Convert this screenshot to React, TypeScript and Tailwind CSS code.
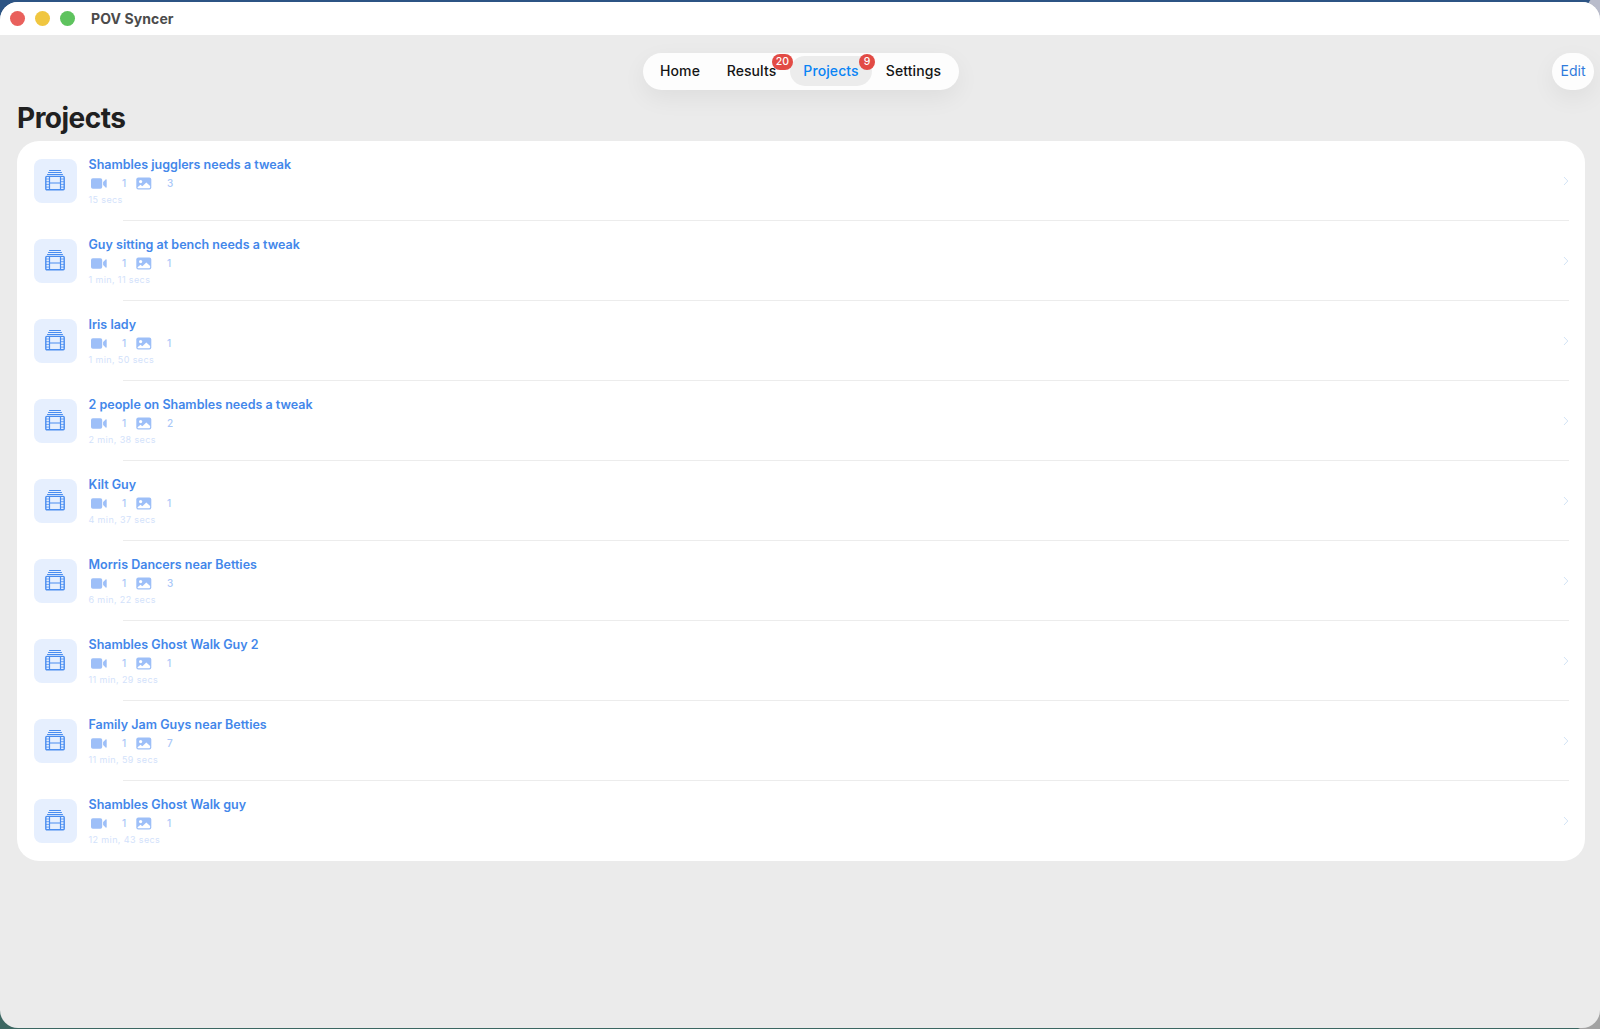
interface ProjectIF {
  name: string;
  videos: number;
  photos: number;
  duration: string;
}

interface TabIF {
  label: string;
  width: string;
  badge?: number;
  active?: boolean;
}

const projects: ProjectIF[] = [
  { name: "Shambles jugglers needs a tweak", videos: 1, photos: 3, duration: "15 secs" },
  { name: "Guy sitting at bench needs a tweak", videos: 1, photos: 1, duration: "1 min, 11 secs" },
  { name: "Iris lady", videos: 1, photos: 1, duration: "1 min, 50 secs" },
  { name: "2 people on Shambles needs a tweak", videos: 1, photos: 2, duration: "2 min, 38 secs" },
  { name: "Kilt Guy", videos: 1, photos: 1, duration: "4 min, 37 secs" },
  { name: "Morris Dancers near Betties", videos: 1, photos: 3, duration: "6 min, 22 secs" },
  { name: "Shambles Ghost Walk Guy 2", videos: 1, photos: 1, duration: "11 min, 29 secs" },
  { name: "Family Jam Guys near Betties", videos: 1, photos: 7, duration: "11 min, 59 secs" },
  { name: "Shambles Ghost Walk guy", videos: 1, photos: 1, duration: "12 min, 43 secs" },
];

const tabs: TabIF[] = [
  { label: "Home", width: "w-[66px]" },
  { label: "Results", width: "w-[77px]", badge: 20 },
  { label: "Projects", width: "w-[82px]", badge: 9, active: true },
  { label: "Settings", width: "w-[83px]" },
];

function FilmStackIcon() {
  return (
    <svg className="mr-px mb-[2px]" width="20" height="22" viewBox="0 0 20 22" fill="none" stroke="#4a8df0">
      <path d="M4.5 1.5h11M3.5 3.5h13M2.5 5.5h15" strokeWidth="1" strokeLinecap="round" />
      <rect x="0.8" y="7.4" width="18.4" height="13.4" rx="1" strokeWidth="1.4" />
      <path d="M4.5 7v14M15.5 7v14M4.5 14h11" strokeWidth="1.2" />
      <path d="M1 10h3.5M1 12.7h3.5M1 15.4h3.5M1 18.1h3.5M15.5 10H19M15.5 12.7H19M15.5 15.4H19M15.5 18.1H19" strokeWidth="0.8" />
    </svg>
  );
}

function VideoIcon() {
  return (
    <svg className="shrink-0" width="16" height="11" viewBox="0 0 16 11" fill="#9dbff8">
      <rect x="0" y="0.3" width="11.2" height="10.4" rx="1.8" />
      <path d="M12.1 4.1 14.6 1.5c.5-.4 1.1-.2 1.1.4v7.2c0 .6-.6.8-1.1.4L12.1 6.9z" />
    </svg>
  );
}

function PhotoIcon() {
  return (
    <svg className="shrink-0" width="16" height="13" viewBox="0 0 16 13" fill="none">
      <rect x="0.3" y="0.5" width="15" height="12" rx="2" fill="#9dbff8" />
      <circle cx="4.6" cy="4.6" r="1.6" fill="#fff" />
      <path d="M1.5 10.2 4.5 7.7l1.8 1.5 4-3.8 3.8 3.7v1.2c0 .6-.4.9-.9.9H2.4c-.5 0-.9-.3-.9-.9z" fill="#fff" />
    </svg>
  );
}

function ProjectRow({ name, videos, photos, duration }: ProjectIF) {
  return (
    <li className="group flex h-20 pl-[17px]">
      <div className="mt-[18px] flex h-[43.5px] w-[43px] shrink-0 items-center justify-center rounded-lg bg-[#e6effe]">
        <FilmStackIcon />
      </div>
      <div className="w-[46px] shrink-0 pt-[15px] pl-[11.5px] whitespace-nowrap">
        <h3 className="text-[12.5px] leading-[18px] font-semibold tracking-[0.01px] text-[#4387ea]">{name}</h3>
        <div className="mt-px flex h-4 w-max items-center pl-[2.5px] text-[10px] font-medium text-[#a9c7f8]">
          <VideoIcon />
          <span className="ml-[15px] w-[5px]">{videos}</span>
          <span className="ml-[8.5px]">
            <PhotoIcon />
          </span>
          <span className="ml-[15.5px]">{photos}</span>
        </div>
        <p className="mt-[3px] text-[9px] leading-[12px] tracking-[0.38px] text-[#d3e2fb]">{duration}</p>
      </div>
      <div className="mr-4 flex grow items-center justify-end border-b border-[#ececec] group-last:border-none">
        <svg width="6" height="10" viewBox="0 0 6 10" fill="none" stroke="#d3e4f6" strokeWidth="1">
          <path d="M1 1l3.8 4L1 9" />
        </svg>
      </div>
    </li>
  );
}

function NavTab({ label, width, badge, active }: TabIF) {
  return (
    <button
      className={`relative flex h-[30px] items-center justify-center rounded-full pb-[2px] ${width} ${
        active ? "bg-[#ececec] text-[#0a84f5]" : "text-[#151515]"
      }`}
    >
      {label}
      {badge && (
        <span className="absolute -top-[2px] -right-[3px] z-10 flex h-4 min-w-4 items-center justify-center rounded-full bg-[#e24b45] px-1 text-[10.5px] font-medium tracking-normal text-white">
          {badge}
        </span>
      )}
    </button>
  );
}

function App() {
  return (
    <div className="h-[1029px] w-[1600px] overflow-hidden bg-[radial-gradient(circle_at_100%_8px,#b9bccb_0_12px,transparent_13px),radial-gradient(circle_at_100%_100%,#a3a3a3_0_20px,transparent_22px),linear-gradient(#2c5484_0_50%,#3c6762_50%)] pt-[2px] pb-px font-[Inter,sans-serif]">
      <div className="flex h-[1026px] flex-col overflow-hidden rounded-[18px] bg-[#ebebeb]">
        <header className="flex h-[33px] shrink-0 items-center bg-white pl-[10px]">
          <div className="flex gap-[10px]">
            <span className="size-[15px] rounded-full bg-[#e9605c]" />
            <span className="size-[15px] rounded-full bg-[#f0c640]" />
            <span className="size-[15px] rounded-full bg-[#5ec35e]" />
          </div>
          <h1 className="ml-4 text-[14px] font-bold tracking-[0.1px] text-[#4b4b4b]">POV Syncer</h1>
        </header>
        <div className="mt-[17.5px] grid h-[36.5px] shrink-0 grid-cols-[1fr_auto_1fr] pr-[6px] pl-[8px]">
          <span />
          <nav className="flex w-[316px] items-center rounded-full bg-[#fdfdfd] pl-1 text-[14px] font-medium tracking-[0.1px] shadow-[0_8px_24px_rgba(0,0,0,0.06)]">
            {tabs.map((tab) => (
              <NavTab key={tab.label} {...tab} />
            ))}
          </nav>
          <button className="h-[37px] w-[42px] justify-self-end rounded-full bg-[#fdfdfd] pb-[2px] text-[14px] text-[#2f7bdc] shadow-[0_8px_24px_rgba(0,0,0,0.06)]">
            Edit
          </button>
        </div>
        <h2 className="mt-[12px] ml-[17px] text-[28px] leading-[34px] font-bold tracking-[-0.5px] text-[#202020]">
          Projects
        </h2>
        <ul className="mt-[6px] mr-[15px] ml-[17px] rounded-[22px] bg-white">
          {projects.map((project) => (
            <ProjectRow key={project.name} {...project} />
          ))}
        </ul>
      </div>
    </div>
  );
}

export default App;
